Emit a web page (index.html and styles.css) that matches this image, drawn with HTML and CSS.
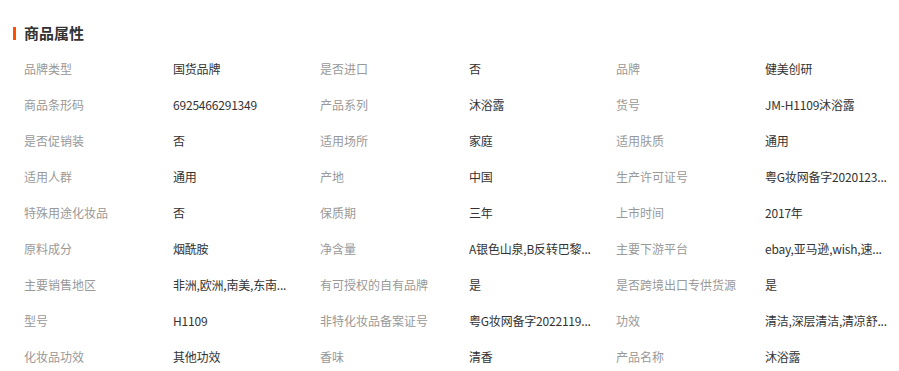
FILE: index.html
```html
<!DOCTYPE html>
<html lang="zh">
<head>
<meta charset="utf-8">
<link rel="stylesheet" href="styles.css">
</head>
<body>
<section class="attrs">
  <h2 class="attrs-title">商品属性</h2>
  <div class="attrs-grid">
    <div class="k">品牌类型</div><div class="v">国货品牌</div>
    <div class="k">是否进口</div><div class="v">否</div>
    <div class="k">品牌</div><div class="v">健美创研</div>

    <div class="k">商品条形码</div><div class="v">6925466291349</div>
    <div class="k">产品系列</div><div class="v">沐浴露</div>
    <div class="k">货号</div><div class="v">JM-H1109沐浴露</div>

    <div class="k">是否促销装</div><div class="v">否</div>
    <div class="k">适用场所</div><div class="v">家庭</div>
    <div class="k">适用肤质</div><div class="v">通用</div>

    <div class="k">适用人群</div><div class="v">通用</div>
    <div class="k">产地</div><div class="v">中国</div>
    <div class="k">生产许可证号</div><div class="v">粤G妆网备字2020123...</div>

    <div class="k">特殊用途化妆品</div><div class="v">否</div>
    <div class="k">保质期</div><div class="v">三年</div>
    <div class="k">上市时间</div><div class="v">2017年</div>

    <div class="k">原料成分</div><div class="v">烟酰胺</div>
    <div class="k">净含量</div><div class="v">A银色山泉,B反转巴黎...</div>
    <div class="k">主要下游平台</div><div class="v">ebay,亚马逊,wish,速...</div>

    <div class="k">主要销售地区</div><div class="v">非洲,欧洲,南美,东南...</div>
    <div class="k">有可授权的自有品牌</div><div class="v">是</div>
    <div class="k">是否跨境出口专供货源</div><div class="v">是</div>

    <div class="k">型号</div><div class="v">H1109</div>
    <div class="k">非特化妆品备案证号</div><div class="v">粤G妆网备字2022119...</div>
    <div class="k">功效</div><div class="v">清洁,深层清洁,清凉舒...</div>

    <div class="k">化妆品功效</div><div class="v">其他功效</div>
    <div class="k">香味</div><div class="v">清香</div>
    <div class="k">产品名称</div><div class="v">沐浴露</div>
  </div>
</section>
</body>
</html>
```
FILE: styles.css
```css
html, body {
  margin: 0;
  padding: 0;
  background: #fff;
}
body {
  font-family: "Noto Sans CJK SC", "Noto Sans", sans-serif;
  font-size: 12px;
  color: #333;
}
.attrs {
  padding: 23px 0 0 13px;
}
.attrs-title {
  margin: 0;
  display: flex;
  align-items: center;
  gap: 8px;
  font-size: 15px;
  font-weight: bold;
  color: #333;
  line-height: 20px;
  height: 20px;
}
.attrs-title::before {
  content: "";
  width: 3px;
  height: 13px;
  background: #ff5000;
}
.attrs-grid {
  margin-top: 7px;
  padding-left: 11px;
  display: grid;
  grid-template-columns: 149px 147px 149px 147px 149px 134px;
  grid-auto-rows: 36px;
  align-items: center;
}
.k {
  color: #999;
  white-space: nowrap;
}
.v {
  color: #333;
  white-space: nowrap;
  letter-spacing: -0.2px;
}
```
